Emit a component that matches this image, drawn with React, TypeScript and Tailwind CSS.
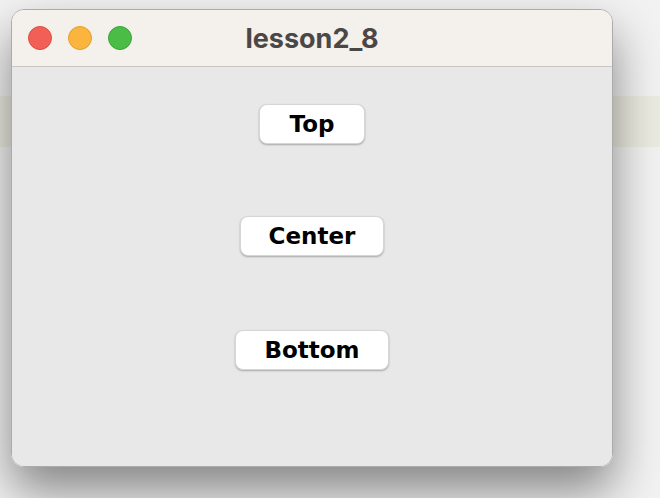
import React from 'react';

const lights = [
  { bg: 'bg-[#f25f57]', border: 'border-[#dc4d45]' },
  { bg: 'bg-[#fbb53f]', border: 'border-[#e0a02f]' },
  { bg: 'bg-[#4bbd47]', border: 'border-[#3aa537]' },
];

function WinButton({ label, className }: { label: string; className: string }) {
  return (
    <button
      className={`h-[40px] flex items-center justify-center rounded-[8px] bg-white border border-[#d6d6d6] shadow-[0_1px_2px_rgba(0,0,0,0.28)] text-[23px] font-bold text-black ${className}`}
      style={{ fontFamily: '"DejaVu Sans", Verdana, sans-serif' }}
    >
      {label}
    </button>
  );
}

export default function App() {
  return (
    <div className="w-[660px] h-[498px] overflow-hidden pt-[9px] pl-[11px] bg-[linear-gradient(to_bottom,#f2f2f2_96px,#ecebe1_96px,#ecebe1_147px,#f2f2f2_147px)]">
      <div className="w-[602px] h-[458px] flex flex-col rounded-[13px] border border-[#ababab] overflow-hidden shadow-[0_24px_48px_rgba(0,0,0,0.45)]">
        <div className="h-[57px] shrink-0 grid grid-cols-[1fr_auto_1fr] items-center bg-[#f4f0ec] border-b border-[#c9c6c3]">
          <div className="flex items-center gap-[16px] pl-[16px]">
            {lights.map((l, i) => (
              <span
                key={i}
                className={`w-[24px] h-[24px] rounded-full border ${l.bg} ${l.border}`}
              />
            ))}
          </div>
          <div
            className="text-[27px] font-bold text-[#4a4746] leading-none"
            style={{ fontFamily: 'Inter, "Noto Sans", sans-serif' }}
          >
            lesson2_8
          </div>
          <div />
        </div>
        <div className="flex-1 flex flex-col items-center bg-[#e8e8e8] pt-[37px]">
          <WinButton label="Top" className="w-[106px]" />
          <WinButton label="Center" className="w-[144px] mt-[72px]" />
          <WinButton label="Bottom" className="w-[154px] mt-[74px]" />
        </div>
      </div>
    </div>
  );
}
